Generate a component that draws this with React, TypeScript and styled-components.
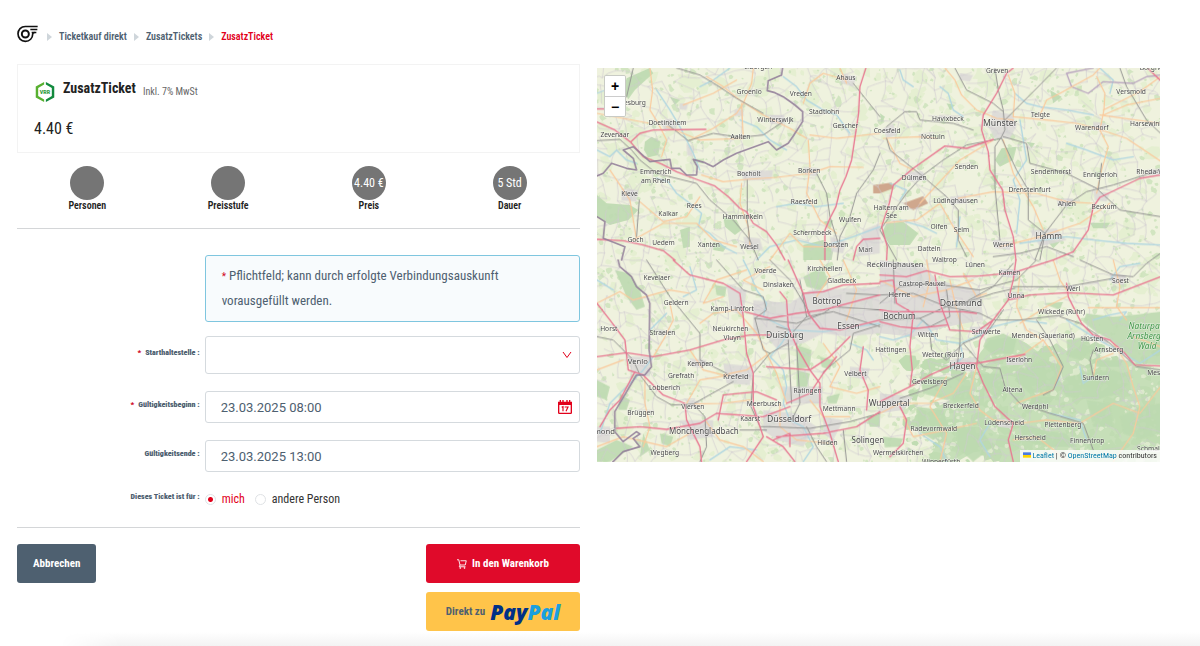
import React from 'react';
import styled, { createGlobalStyle } from 'styled-components';

const condensed = '"Roboto Condensed", "Liberation Sans Narrow", Roboto, sans-serif';

const GlobalStyle = createGlobalStyle`
  *, *::before, *::after { box-sizing: border-box; }
  body { margin: 0; background: #fff; color: #222; font-family: ${condensed}; font-size: 14px; }
  button, input, select { font-family: inherit; }
`;

const Page = styled.div`
  min-height: 100vh;
  display: flex;
  flex-direction: column;
`;

const Breadcrumb = styled.nav`
  display: flex;
  align-items: center;
  gap: 7px;
  height: 20px;
  margin: 27px 17px 17px;
  font-size: 10px;
  font-weight: 600;
`;

const Crumb = styled.a<{ $current?: boolean }>`
  color: ${(p) => (p.$current ? '#e2001a' : '#4e6070')};
  text-decoration: none;
  line-height: 20px;
`;

const HomeCrumb = styled(Crumb)`
  margin-right: 2px;
`;

const Separator = styled.span`
  border: 4px solid transparent;
  border-left: 5px solid #cfd6db;
  border-right: 0;
`;

const Columns = styled.main`
  flex: 1;
  display: grid;
  grid-template-columns: minmax(0, 1fr) minmax(0, 1fr);
  gap: 17px;
  padding: 0 40px 0 17px;
  align-items: start;
`;

const TicketCard = styled.section`
  height: 89px;
  border: 1px solid #f3f3f3;
  padding: 14px 16px;
`;

const TicketHead = styled.div`
  display: flex;
  align-items: flex-end;
  gap: 7px;
  height: 24px;
`;

const TicketTitle = styled.h1`
  margin: 0;
  padding-bottom: 5px;
  font-size: 14px;
  line-height: 20px;
  font-weight: 700;
`;

const TaxNote = styled.small`
  padding-bottom: 5px;
  font-size: 10px;
  line-height: 12px;
  color: #666;
`;

const Price = styled.p`
  margin: 16px 0 0;
  font-size: 16px;
  line-height: 20px;
`;

const Facts = styled.ul`
  display: grid;
  grid-template-columns: repeat(4, 1fr);
  list-style: none;
  margin: 0;
  padding: 13px 0 16px;
  border-bottom: 1px solid #d4d6d8;
`;

const Fact = styled.li`
  display: flex;
  flex-direction: column;
  align-items: center;
  font-size: 10px;
  line-height: 12px;
  font-weight: 600;
`;

const FactValue = styled.span`
  width: 34px;
  height: 34px;
  border-radius: 50%;
  background: #757575;
  color: #fff;
  display: flex;
  align-items: center;
  justify-content: center;
  white-space: nowrap;
  font-size: 12px;
  font-weight: 400;
`;

const Form = styled.form``;

const Fields = styled.div`
  display: grid;
  gap: 17px;
  padding: 26px 0 18px;
  border-bottom: 1px solid #d4d6d8;
`;

const Row = styled.div`
  display: grid;
  grid-template-columns: 1fr 2fr;
  align-items: center;
`;

const Label = styled.label`
  padding: 0 5px 4px 0;
  text-align: right;
  color: #4e6070;
  font-size: 8px;
  line-height: 12px;
  font-weight: 900;
`;

const Required = styled.span`
  color: #d0021b;
  margin-right: 2px;
`;

const NoticeMark = styled.span`
  color: #d0021b;
  font-size: 10px;
  line-height: 12px;
  margin-right: 3px;
`;

const Notice = styled.p`
  grid-column: 2;
  margin: 0 0 -3px;
  padding: 7px 16px 8px;
  border: 1px solid #7fc6df;
  border-radius: 3px;
  background: #f8fbfd;
  color: #4e6070;
  font-size: 13px;
  line-height: 25px;
`;

const Control = styled.div`
  position: relative;
`;

const Select = styled.select`
  display: block;
  width: 100%;
  height: 38px;
  padding: 0 32px 0 16px;
  border: 1px solid #d5dade;
  border-radius: 3px;
  background: #fff;
  appearance: none;
  font-size: 13px;
`;

const TextInput = styled.input`
  display: block;
  width: 100%;
  height: 32px;
  padding: 0 32px 0 15px;
  border: 1px solid #d5dade;
  border-radius: 3px;
  background: #fff;
  color: #4e6070;
  && { font-family: Roboto, sans-serif; }
  font-size: 13px;
`;

const ControlIcon = styled.svg`
  position: absolute;
  right: 8px;
  top: 50%;
  margin-top: -7px;
  pointer-events: none;
`;

const Radios = styled.div`
  display: flex;
  gap: 10px;
  height: 20px;
`;

const RadioLabel = styled.label`
  display: flex;
  align-items: center;
  gap: 6px;
  font-size: 12px;
  color: #333;
  &:has(input:checked) { color: #e2001a; }
`;

const Radio = styled.input`
  appearance: none;
  width: 11px;
  height: 11px;
  margin: 0;
  border: 1px solid #dfe2e5;
  border-radius: 50%;
  &:checked { background: radial-gradient(circle, #e2001a 2px, #fff 3px); }
`;

const Actions = styled.div`
  display: flex;
  justify-content: space-between;
  align-items: flex-start;
  padding: 16px 0 0;
`;

const BuyActions = styled.div`
  display: grid;
  gap: 9px;
  width: 154px;
`;

const tones = {
  slate: ['#4e6070', '#fff'],
  red: ['#e00a2a', '#fff'],
  yellow: ['#ffc44a', '#4e6070'],
} as const;

const Button = styled.button<{ $tone: keyof typeof tones }>`
  display: flex;
  align-items: center;
  justify-content: center;
  gap: 5px;
  height: 39px;
  padding: 0 16px;
  border: 0;
  border-radius: 3px;
  background: ${(p) => tones[p.$tone][0]};
  color: ${(p) => tones[p.$tone][1]};
  font-size: 11px;
  font-weight: 700;
  white-space: nowrap;
`;

const PayPalMark = styled.span`
  font-family: "Open Sans", sans-serif;
  font-size: 21px;
  line-height: 24px;
  font-weight: 800;
  font-style: italic;
  color: #003087;
`;

const PayPalEnd = styled.span`
  color: #1a9fdf;
`;

const FooterShade = styled.footer`
  height: 14px;
  margin-left: 60px;
  background: linear-gradient(to bottom, #fff, #f3f3f3);
  mask-image: linear-gradient(to right, transparent, #000 60px);
`;

const MapBox = styled.section`
  position: relative;
  height: 394px;
  margin-top: 4px;
  overflow: hidden;
  background: #eef0d8;
`;

const MapCanvas = styled.svg`
  display: block;
  width: 100%;
  height: 100%;
`;

const ZoomControl = styled.div`
  position: absolute;
  top: 7px;
  left: 7px;
  width: 22px;
  border: 1px solid #c9cbc5;
  border-radius: 2px;
  overflow: hidden;
`;

const ZoomButton = styled.button`
  display: block;
  width: 20px;
  height: 20px;
  padding: 0;
  border: 0;
  background: #fff;
  color: #000;
  && { font-family: "Liberation Sans", sans-serif; }
  font-size: 14px;
  line-height: 20px;
  font-weight: 700;
  & + & { border-top: 1px solid #ccc; }
`;

const Attribution = styled.div`
  position: absolute;
  right: 0;
  bottom: 0;
  padding: 0 3px;
  background: rgba(255, 255, 255, 0.8);
  color: #333;
  font-size: 8px;
  line-height: 12px;
  white-space: nowrap;
`;

const AttributionLink = styled.a`
  color: #0078a8;
  text-decoration: none;
`;

type Place = [string, number, number, number?];
type Tile = {
  x: number;
  y: number;
  urban: string;
  woods: string;
  streams: string;
  primary: string;
  rail: string;
  motorway: string;
  border: string;
  places: Place[];
};

const tiles: Tile[] = [
  {
    x: 0,
    y: 0,
    urban:
      'M210 185L245 175L260 205L225 212ZM435 150L460 148L462 168L432 168ZM540 165L585 165L580 195L540 190ZM455 335L550 330L545 360L460 362ZM640 320L690 325L680 350L645 345ZM95 385L145 390L140 425L95 422ZM460 530L510 535L520 570L470 570ZM720 530L770 545L760 580L725 575ZM820 510L870 490L870 580L800 590ZM755 40L800 50L790 80L755 70ZM270 130L295 130L290 150L268 148ZM290 250L310 260L308 290L292 285Z',
    woods:
      'M110 55L180 24L190 40L135 90L115 118L100 90ZM165 245L185 230L212 245L205 285L175 292L162 270ZM21 405L50 430L120 435L145 450L115 480L60 495L21 470ZM400 470L440 480L455 510L435 525L405 500ZM640 555L700 540L730 570L725 600L640 600ZM270 510L300 500L300 560L280 565ZM240 110L270 120L255 135ZM370 545L410 560L400 575L370 570ZM700 485L730 480L720 510Z',
    streams:
      'M200 355L235 365L260 400L300 430L335 460L325 500L360 520L400 560L440 580M21 270L60 290L80 270L110 300L140 310M200 90L240 150L270 200L310 280L330 330M580 50L620 80L650 120L700 150L740 165L780 220M450 180L500 200L540 240L590 270M330 80L370 60L420 24M500 600L540 560L620 540L700 560L790 530L870 500M21 100L60 85L100 120M560 440L620 430L680 440L760 430',
    primary:
      'M180 24L188 90L180 150L205 190L230 240L215 290M490 24L485 70L460 130L440 160L370 205L300 240M350 50L400 80L450 120L520 165L600 205L650 235M280 135L370 100L440 60M655 240L660 320L650 400L690 480L740 520M335 345L400 365L470 358L560 352L660 340L720 320L820 322M455 370L450 430L475 500L480 555M770 60L700 40L660 70L640 130M150 425L220 485L290 470L330 410M130 540L220 490L320 490L370 540L440 560M230 200L330 240L460 235L455 130M660 225L740 235L870 220M21 160L100 175L180 190M60 330L120 420L140 540M750 24L770 70M540 600L600 520L640 560L740 560',
    rail: 'M260 24L330 45L380 75L440 115L520 160M21 242L90 238L125 270L150 300L200 340L320 370L360 420L430 480L480 540L505 600M235 195L295 242L370 220L450 232L520 225L580 185M472 360L472 480L480 545M870 170L838 130L790 70M870 280L850 330L800 400L780 470L750 530L742 600M680 340L710 400L720 470L745 550M148 420L140 530M130 24L110 110',
    motorway:
      'M21 186L75 210L122 246L160 290L215 312L260 335L320 358L375 378L415 410L450 445L470 455L490 490L530 515L560 555L585 600M122 246L150 220L190 210L348 208M828 24L810 80L806 160L800 200L785 300L768 350L750 390L738 440L720 475L705 510L705 600M21 538L100 542L160 555L220 572L255 600M790 600L800 560L820 538L870 535M21 147L45 147',
    border:
      'M578 24L575 45L535 62L532 92L555 98L580 110L615 135L638 155L638 185L612 225L595 250L560 270L535 245L500 258L440 280L400 300L370 320L345 308L310 298L322 320L320 345L290 345L270 325L245 325L240 298L180 305L130 260L100 270L130 295L140 330L110 325L65 310L40 340L21 348M21 470L45 485L40 535L105 560L95 600',
    places: [
      ['Eibergen', 505, 21], ['Ahaus', 768, 52], ['Groenlo', 478, 94], ['Vreden', 633, 102], ['Doesburg', 122, 129],
      ['Stadtlohn', 703, 155], ['Winterswijk', 557, 179], ['Doetinchem', 233, 187], ['Gescher', 767, 198],
      ['Zevenaar', 75, 223], ['Aalten', 452, 231], ['Emmerich', 198, 336], ['am Rhein', 198, 361],
      ['Bocholt', 477, 341], ['Borken', 658, 333], ['Kleve', 119, 400], ['Rees', 313, 437], ['Raesfeld', 643, 425],
      ['Kalkar', 235, 461], ['Hamminkeln', 459, 471], ['Wulfen', 781, 479], ['Schermbeck', 668, 518],
      ['Goch', 137, 538], ['Uedem', 221, 547], ['Xanten', 357, 554], ['Wesel', 479, 559], ['Dorsten', 738, 555], ['Marl', 827, 570],
    ],
  },
  {
    x: 870,
    y: 0,
    urban:
      'M340 150L400 165L410 200L390 235L345 235L325 200ZM80 335L130 335L140 360L90 365ZM10 205L40 190L50 225L20 235ZM450 510L530 505L560 540L480 560ZM640 390L690 400L680 425L645 420ZM530 415L580 415L575 440L535 440ZM640 185L680 190L670 215L640 210ZM240 40L280 45L270 65L240 60ZM210 410L260 405L255 430L215 432ZM340 540L400 545L390 570L345 565ZM800 330L842 325L842 345L805 345Z',
    woods:
      'M20 490L70 485L115 520L90 555L30 555L5 520ZM365 265L410 260L400 300L360 320L345 300ZM630 488L690 488L680 505L640 505ZM440 245L465 250L455 265ZM200 130L225 135L210 150ZM500 540L540 545L520 565ZM330 350L355 345L350 375ZM510 90L545 110L520 130ZM0 160L15 170L5 190Z',
    streams:
      'M60 30L70 60L100 80M180 80L205 100L220 150L250 170M405 100L440 130L480 140L560 150L640 165M420 180L430 240L440 300L400 360L420 420L410 520M60 480L130 500L170 520M240 470L230 560M842 555L740 550L640 540L560 530L420 550M660 24L700 60L690 100M30 370L80 390L60 420M560 250L620 270L700 300L760 290',
    primary:
      'M195 24L225 60L245 105L290 150L315 160L350 175L400 180M385 45L405 100L400 170L500 180L590 190L650 205L740 235L842 303M480 165L500 120L540 100L640 45L660 24M670 165L740 135L842 115M650 50L675 100L672 150L660 210L685 260L665 330L650 400M235 415L340 395L470 400L560 425L640 430M120 430L240 300L340 240M370 240L400 340L460 440L490 510M0 490L110 480L180 430M180 430L220 500L280 590M20 235L60 310L100 330M10 235L120 230L170 235M360 560L480 530L600 490L690 430M842 50L780 95L670 150M660 165L842 190',
    rail: 'M530 24L470 85L375 180M345 24L355 90L370 150L375 210L365 230L345 260L345 380L360 540M225 24L260 90L340 130L370 155M365 235L260 255L190 300L130 345L80 400L0 510L50 600M365 235L410 330L445 390L445 480L495 520M465 600L495 520L560 435L620 395L700 375L842 330M495 520L480 600M20 200L75 155L110 155L120 180L220 190L280 210M20 235L30 270L130 350L200 410L235 450L235 540L260 590M720 24L740 80L800 180L842 220M370 230L440 250L450 310L560 340L650 385L720 450L842 470M340 590L420 580L500 560L580 590M665 310L655 390',
    motorway:
      'M400 24L380 40L350 100L310 165L305 210L325 275L330 330L368 390L375 450L400 530L408 600M340 238L260 265L195 258L100 325L40 375L28 430L5 500L22 560L20 600M842 345L780 355L660 412L640 440L625 510L580 575L520 600M803 24L842 62',
    border: '',
    places: [
      ['Greven', 352, 32], ['Borgholz', 822, 24], ['Versmold', 754, 95], ['Telgte', 482, 165], ['Havixbeck', 204, 175],
      ['Münster', 361, 191, 26], ['Harsewinkel', 808, 191], ['Warendorf', 636, 202], ['Coesfeld', 22, 211],
      ['Nottuln', 159, 230], ['Senden', 260, 321], ['Sendenhorst', 513, 334], ['Ennigerloh', 661, 344],
      ['Rheda-Wied', 826, 335], ['Dülmen', 103, 353], ['Drensteinfurt', 449, 390], ['Lüdinghausen', 227, 422],
      ['Ahlen', 561, 432], ['Beckum', 673, 441], ['Haltern am', 34, 442], ['See', 35, 468], ['Olfen', 178, 499],
      ['Selm', 245, 508], ['Hamm', 507, 530, 25], ['Werne', 370, 553], ['Datteln', 148, 566],
    ],
  },
  {
    x: 0,
    y: 600,
    urban:
      'M490 120L600 130L660 90L870 80L870 220L770 230L700 220L640 250L560 265L520 220L490 230ZM400 310L490 320L480 375L410 370ZM110 290L180 290L180 350L130 345ZM270 480L370 480L370 530L300 540ZM520 450L620 460L680 500L640 560L560 540L520 510ZM410 70L470 90L460 170L420 150ZM570 380L700 380L690 430L590 430ZM780 320L840 325L830 360L780 350ZM700 470L760 480L730 540L700 520ZM280 415L330 425L310 445ZM200 205L240 215L215 230ZM300 295L350 300L340 325L305 320ZM21 500L60 500L60 550L21 545Z',
    woods:
      'M75 30L120 40L150 90L165 140L140 150L110 110ZM640 50L700 20L715 70L690 90L650 80ZM620 255L665 270L660 320L620 330ZM375 75L410 80L405 110L380 105ZM620 330L660 340L650 390L620 385ZM21 360L60 380L50 420L21 410ZM90 400L120 420L110 450L85 450ZM80 540L130 560L60 605L21 605L21 570ZM830 470L870 460L870 500L840 500ZM210 520L250 530L240 560L215 550ZM690 290L730 300L720 330L695 320ZM710 410L750 400L740 430L715 430ZM160 520L180 570L150 590Z',
    streams:
      'M460 0L480 40L500 90L530 130L520 170L560 190L600 210L575 250L540 290L580 330L590 380L580 430L600 480L640 500L670 560L640 605M190 290L160 330L60 430L30 520M300 20L320 90L280 110M600 210L700 215L870 190M230 160L180 210M780 250L830 270L850 300M360 600L420 560L500 570M21 60L70 90',
    primary:
      'M20 130L90 95L130 120L240 90L300 100M190 290L220 240L250 180L240 130M21 330L100 300M165 350L165 430L180 500L160 560M300 270L340 330L400 345L470 330L530 285M330 190L370 160L440 150M400 110L340 130L380 60L470 30M310 432L400 430L480 420M420 345L330 360L290 430M345 480L390 540L460 560L520 605M690 0L720 50L680 110M760 0L800 90L770 180M440 150L500 220L560 340L590 430M570 430L570 500L620 540L720 550M700 250L750 320L720 380L800 400L870 380M660 420L700 470L780 470M520 90L460 60L540 20M21 560L100 530L230 560L300 520',
    rail: 'M170 0L240 110L330 220L330 300L370 320L420 345M380 0L460 90L520 110L530 150L495 175M21 230L70 240L130 300L150 345M150 345L200 410L245 435L310 432L430 365M495 175L540 180L620 190L700 160L730 140L870 150M610 215L650 170L730 155L870 200M595 250L540 280L490 340L483 440L510 500L540 500M595 240L605 430M620 250L630 430L605 480M540 500L660 505L780 485L870 460M310 432L345 470L350 560L330 605M450 510L530 510M650 500L680 560L710 605M495 175L520 270L540 280M600 210L560 200M700 335L780 270L790 220L870 195M540 0L600 60L660 160M770 100L870 105M760 510L770 605M630 60L650 170',
    motorway:
      'M250 0L300 45L400 70L450 100L460 170L470 280L490 340L490 440L520 530L470 605M21 290L110 278L190 290L300 270L400 240L480 225L540 225M21 130L60 180L105 240L115 330L160 345L220 405L285 430L290 480L300 500L330 560L335 605M135 335L90 420L60 450L30 500M80 505L150 500L230 508L330 490L380 460L520 470L600 440M385 480L400 405L500 395L560 420M465 155L540 175L620 160L700 150L870 105M570 95L590 120L595 200L620 260L660 330L690 370L690 440L720 520L745 605M595 0L640 100L655 160L690 205L750 210L870 180M530 320L600 325L660 330L720 290L780 230M640 100L700 95L760 75L870 70M590 430L660 400L700 340L740 290M820 260L810 330L835 390L830 450M560 530L700 520L800 500L870 455M530 530L580 560L615 605M550 540L600 520L600 560',
    border:
      'M85 0L90 20L125 50L140 80L170 105L180 130L178 270L185 320L165 345L140 345L75 455L75 515L100 545L140 515L150 522L130 535L150 560L100 575L70 605',
    places: [
      ['Kirchhellen', 705, 25], ['Voerde', 527, 33], ['Kevelaer', 201, 53], ['Dinslaken', 566, 74],
      ['Gladbeck', 756, 63], ['Geldern', 259, 129], ['Bottrop', 711, 125, 24], ['Kamp-Lintfort', 427, 147],
      ['Horst', 57, 206], ['Straelen', 218, 217], ['Neukirchen', 422, 206], ['Vluyn', 427, 232],
      ['Duisburg', 585, 228, 26], ['Essen', 776, 199, 25], ['Venlo', 144, 304, 23], ['Kempen', 331, 312],
      ['Grefrath', 274, 346], ['Krefeld', 438, 350, 23], ['Velbert', 797, 341], ['Lobberich', 224, 382],
      ['Ratingen', 653, 392], ['Viersen', 309, 440], ['Meerbusch', 523, 431], ['Mettmann', 748, 445],
      ['Brüggen', 153, 457], ['Kaarst', 481, 477], ['Düsseldorf', 598, 478, 26], ['Roermond', 18, 516, 23],
      ['Mönchengladbach', 342, 515, 24], ['Hilden', 713, 547], ['Wegberg', 225, 577],
    ],
  },
  {
    x: 870,
    y: 600,
    urban:
      'M0 0L130 15L170 60L300 90L310 180L200 200L100 230L0 220ZM210 300L290 290L280 335L220 330ZM0 400L100 410L70 450L0 460ZM380 290L440 290L430 315L380 315ZM380 95L430 95L420 120L385 120ZM270 200L330 200L320 225L280 225ZM690 40L740 45L730 75L695 70ZM640 225L690 235L680 255ZM350 475L400 480L390 505L355 500ZM540 75L590 75L580 95ZM360 25L420 30L410 55L365 50Z',
    woods:
      'M620 160L700 170L760 165L842 155L842 315L770 310L735 280L700 245L640 210L610 185ZM320 235L370 220L410 240L400 280L340 285L310 260ZM420 330L490 300L540 315L545 340L510 395L450 400L405 360ZM120 350L200 350L270 360L280 420L200 420L130 400ZM300 340L360 340L375 390L350 420L320 390ZM560 350L620 340L700 330L760 350L720 400L650 420L560 410L540 380ZM720 470L780 440L842 430L842 520L780 540L730 520ZM420 490L490 510L560 520L590 560L500 560L430 540ZM110 440L190 450L210 510L160 540L110 510ZM230 500L300 500L340 560L280 605L230 560ZM10 530L70 535L60 560L15 562ZM560 240L620 230L640 270L600 300L565 290ZM640 300L730 300L720 320L650 320ZM490 130L550 125L540 150ZM460 410L520 410L500 450L440 440ZM620 420L690 430L700 500L640 500Z',
    streams:
      'M0 230L40 240L90 225L130 180L170 240L240 250L290 230L340 200L420 180L500 190M640 180L690 165L740 155L720 180M600 320L610 370L640 350M240 250L250 290L210 330M842 270L780 310L730 280L640 230L560 180M540 350L520 390M690 60L720 20L780 10M120 520L180 560L200 605M330 490L300 540L330 590M510 460L600 480L620 540',
    primary:
      'M140 0L150 60L130 140M250 40L290 110L320 100M210 60L230 150L250 210M420 40L410 140L440 210L490 240L420 290L380 290M520 0L540 60L560 90M700 0L720 80L710 140L740 180M0 60L100 110L200 90L280 60M490 240L545 320L520 390L460 410L410 430M290 320L270 400L300 450L340 480L420 490L500 480L600 490L700 430L780 460L842 380M700 250L740 310L760 380L780 440L760 520L700 605M0 460L60 430L150 430L220 400L260 340M200 350L150 440L200 520L180 605M640 350L650 300L700 280M420 190L500 140L560 110M400 540L470 530L560 600M842 260L760 230M625 143L842 143M70 470L100 530L200 510L290 490',
    rail: 'M0 130L60 80L150 70L300 90L410 60L470 0M600 0L700 45L760 50L800 10L842 -20M0 180L120 175L200 140L300 160L340 180L420 180L550 165M150 220L155 270L200 300L250 250L310 320L360 325L375 380L420 430L510 460L610 490L640 570M370 150L320 220L250 250M60 415L150 385L250 340M470 180L510 240L550 320L520 390L490 405M640 270L630 300L640 350M540 170L600 190L690 250L770 320L842 330M400 80L560 80L700 55M0 105L100 100L200 140L250 130L340 100L405 85M120 175L150 200L210 170L200 90M240 150L240 250L230 330M40 0L45 130M400 10L340 80L250 130',
    motorway:
      'M0 45L80 50L140 32L210 50L300 48L400 38L520 0M408 0L400 60L385 120L340 180L300 240L290 320L310 370L345 440L400 490L385 540L400 605M385 120L450 105L560 98L700 105L842 50M40 60L50 130L100 160L90 260L97 330L90 380L0 425M40 155L250 155L290 160M90 380L150 345L230 310L290 310L435 283M165 45L180 130L210 210L290 215L340 180M560 70L565 110L605 190L640 225L690 240L735 280L765 315L842 318M0 185L60 200L110 205L200 195M60 440L80 480L70 550L30 590M0 150L40 155M0 65L40 60',
    border: '',
    places: [
      ['Recklinghausen', 46, 13, 23], ['Waltrop', 194, 0], ['Lünen', 286, 13], ['Kamen', 389, 39], ['Soest', 722, 62], ['Castrop-Rauxel', 127, 72],
      ['Werl', 580, 85], ['Herne', 59, 103, 23], ['Unna', 409, 107], ['Dortmund', 243, 132, 26], ['Wickede (Ruhr)', 545, 156],
      ['Bochum', 59, 171, 25], ['Witten', 145, 224], ['Schwerte', 319, 215], ['Menden (Sauerland)', 490, 226],
      ['Hüsten', 637, 235], ['Hattingen', 33, 269], ['Arnsberg', 687, 270], ['Wetter (Ruhr)', 190, 285],
      ['Iserlohn', 418, 299], ['Hagen', 248, 319, 25], ['Meschede', 850, 337], ['Sundern', 648, 353],
      ['Gevelsberg', 149, 365], ['Altena', 398, 389], ['Wuppertal', 28, 432, 25], ['Breckerfeld', 243, 437],
      ['Werdohl', 466, 440], ['Lüdenscheid', 373, 487], ['Plettenberg', 549, 493], ['Radevormwald', 162, 505],
      ['Herscheid', 451, 533], ['Finnentrop', 622, 541], ['Solingen', -36, 543, 24], ['Schmallen', 820, 565],
      ['Wermelskirchen', 55, 579], ['Wipperfürth', 184, 606],
    ],
  },
];

/* Seeded generator, so that the ground texture is the same on every render. */
function makeRandom(seed: number) {
  let s = seed;
  return () => {
    s = (s * 1664525 + 1013904223) % 4294967296;
    return s / 4294967296;
  };
}

function buildPatches(count: number, seed: number, min: number, max: number, hilly: boolean) {
  const rnd = makeRandom(seed);
  let d = '';
  for (let i = 0; i < count; i++) {
    const cx = 21 + rnd() * 1690;
    const cy = 24 + rnd() * 1182;
    if (hilly && (cx < 950 || cy < 820 + (1711 - cx) * 0.12)) continue;
    const r = min + rnd() * rnd() * (max - min);
    for (let k = 0; k < 7; k++) {
      const a = (k / 7) * Math.PI * 2;
      const q = r * (0.5 + rnd() * 0.8);
      d += `${k ? 'L' : 'M'}${Math.round(cx + Math.cos(a) * q)} ${Math.round(cy + Math.sin(a) * q)}`;
    }
    d += 'Z';
  }
  return d;
}

function buildLanes() {
  const rnd = makeRandom(77);
  const step = 38;
  const cols = 46;
  const rows = 33;
  const pts: [number, number][][] = [];
  for (let r = 0; r < rows; r++) {
    pts.push([]);
    for (let c = 0; c < cols; c++) {
      pts[r].push([Math.round(c * step + (rnd() - 0.5) * 34), Math.round(r * step + (rnd() - 0.5) * 34)]);
    }
  }
  let d = '';
  const join = (a: [number, number], b: [number, number]) => {
    const mx = Math.round((a[0] + b[0]) / 2 + (rnd() - 0.5) * 16);
    const my = Math.round((a[1] + b[1]) / 2 + (rnd() - 0.5) * 16);
    d += `M${a[0]} ${a[1]}Q${mx} ${my} ${b[0]} ${b[1]}`;
  };
  for (let r = 0; r < rows - 1; r++) {
    for (let c = 0; c < cols - 1; c++) {
      if (rnd() < 0.55) join(pts[r][c], pts[r][c + 1]);
      if (rnd() < 0.55) join(pts[r][c], pts[r + 1][c]);
      if (rnd() < 0.1) join(pts[r][c], pts[r + 1][c + 1]);
    }
  }
  return d;
}

const meadows = buildPatches(900, 5, 8, 34, false);
const copses = buildPatches(1500, 11, 3, 13, false);
const hills = buildPatches(2200, 23, 8, 34, true);
const clearings = buildPatches(2600, 31, 4, 16, true);
const lanes = buildLanes();

type LayerKey = 'urban' | 'woods' | 'streams' | 'primary' | 'rail' | 'motorway' | 'border';

function Layer({ of, ...rest }: { of: LayerKey } & React.SVGProps<SVGGElement>) {
  return (
    <g {...rest}>
      {tiles.map((t) => (
        <path key={`${t.x}-${t.y}`} d={t[of]} transform={`translate(${t.x} ${t.y})`} />
      ))}
    </g>
  );
}

function RegionMap() {
  return (
    <MapCanvas viewBox="21 24 1690 1182" preserveAspectRatio="xMidYMid slice" role="img" aria-label="Karte">
      <rect x="-600" y="-600" width="3000" height="2400" fill="#eff2de" />
      <path d={meadows} fill="#e2edcc" opacity="0.75" />
      <path d={copses} fill="#c6dfb5" opacity="0.7" />
      <path
        d="M1170 880L1200 840L1270 830L1310 850L1350 880L1400 850L1440 880L1480 850L1540 890L1600 900L1711 925V1206H1230L1180 1160L1100 1206H1010L1060 1120L1010 1060L1080 1020L1130 960Z"
        fill="#c6dfb8"
      />
      <path d={hills} fill="#c0dcb2" />
      <path d={clearings} fill="#e9f0d8" opacity="0.65" />
      <Layer of="woods" fill="#bddab0" opacity="0.9" />
      <Layer of="urban" fill="#dbd9d7" opacity="0.85" />
      <path d="M940 430L1000 408L1015 430L970 450ZM850 375L905 368L910 385L870 400L850 400Z" fill="#cfa78d" />
      <g fill="none" strokeLinejoin="round" strokeLinecap="round">
        <path d={lanes} stroke="#cfcad0" strokeWidth="2.5" opacity="0.75" />
        <Layer of="streams" stroke="#b0d6e0" strokeWidth="4" />
        <path
          d="M1510 24L1430 40L1445 80L1495 100L1540 65L1630 70L1670 50L1711 45"
          stroke="#b9a6bf"
          strokeWidth="4"
        />
        <Layer of="primary" stroke="#fac99b" strokeWidth="3.500" />
        <Layer of="rail" stroke="#949492" strokeWidth="3" />
        <Layer of="motorway" stroke="#e87690" strokeWidth="4" />
        <Layer of="border" stroke="#94819b" strokeWidth="5" opacity="0.9" />
      </g>
      <g
        fontFamily='"Noto Sans", sans-serif'
        textAnchor="middle"
        fill="#4a4a4a"
        stroke="#fff"
        strokeOpacity="0.55"
        strokeWidth="3"
        style={{ paintOrder: 'stroke' }}
      >
        {tiles.map((t) =>
          t.places.map(([name, x, y, size = 20]) => (
            <text key={name} x={t.x + x} y={t.y + y + 7} fontSize={size}>
              {name}
            </text>
          )),
        )}
        <g fill="#3f9547" fontStyle="italic" fontSize="25">
          <text x="1674" y="808">Naturpark</text>
          <text x="1663" y="838">Arnsberg</text>
          <text x="1672" y="868">Wald</text>
        </g>
      </g>
    </MapCanvas>
  );
}

function HomeLogo() {
  return (
    <svg width="21" height="18" viewBox="0 0 63 54" fill="none" stroke="#111" aria-hidden="true">
      <path d="M62 4.500H25C12 4.500 3 14 3 26.500S12 49 25 49S47 39.500 47 27.500C47 24 49 22.500 53 22.500" strokeWidth="5" />
      <circle cx="25" cy="27" r="10.500" strokeWidth="6" />
      <path d="M40 13.500H61M44 22.500H58" strokeWidth="4" />
    </svg>
  );
}

function VrrLogo() {
  return (
    <svg width="22" height="22" viewBox="0 0 63 63" aria-hidden="true">
      <path d="M29 3L5 16V47L29 60V53L12 43V20L29 10Z" fill="#58b030" />
      <path d="M34 3L58 16V47L34 60V53L51 43V20L34 10Z" fill="#128a3e" />
      <text x="31.500" y="37" textAnchor="middle" fontFamily="Roboto, sans-serif" fontWeight="900" fontSize="15" fill="#2d9c3c">
        VRR
      </text>
    </svg>
  );
}

function CartIcon() {
  return (
    <svg width="10" height="10" viewBox="0 0 20 20" fill="none" stroke="#fff" strokeWidth="1.800" aria-hidden="true">
      <path d="M0 1.500H3.500L6 12H16.500L18.500 3.500H7M6 12L4.500 15.500H17" />
      <circle cx="6.500" cy="18" r="1" />
      <circle cx="15" cy="18" r="1" />
    </svg>
  );
}

const facts = [
  { label: 'Personen', value: '' },
  { label: 'Preisstufe', value: '' },
  { label: 'Preis', value: '4.40 €' },
  { label: 'Dauer', value: '5 Std' },
];

export default function App() {
  return (
    <Page>
      <GlobalStyle />
      <Breadcrumb aria-label="Brotkrumen">
        <HomeCrumb href="#start" aria-label="Startseite">
          <HomeLogo />
        </HomeCrumb>
        <Separator />
        <Crumb href="#direkt">Ticketkauf direkt</Crumb>
        <Separator />
        <Crumb href="#zusatz">ZusatzTickets</Crumb>
        <Separator />
        <Crumb href="#ticket" $current>
          ZusatzTicket
        </Crumb>
      </Breadcrumb>
      <Columns>
        <div>
          <TicketCard>
            <TicketHead>
              <VrrLogo />
              <TicketTitle>ZusatzTicket</TicketTitle>
              <TaxNote>Inkl. 7% MwSt</TaxNote>
            </TicketHead>
            <Price>4.40 €</Price>
          </TicketCard>
          <Facts>
            {facts.map((f) => (
              <Fact key={f.label}>
                <FactValue>{f.value}</FactValue>
                {f.label}
              </Fact>
            ))}
          </Facts>
          <Form onSubmit={(e) => e.preventDefault()}>
            <Fields>
              <Row>
                <Notice>
                  <NoticeMark>*</NoticeMark>Pflichtfeld; kann durch erfolgte Verbindungsauskunft vorausgefüllt werden.
                </Notice>
              </Row>
              <Row>
                <Label htmlFor="stop">
                  <Required>*</Required> Starthaltestelle :
                </Label>
                <Control>
                  <Select id="stop" defaultValue="">
                    <option value=""></option>
                  </Select>
                  <ControlIcon width="10" height="14" viewBox="0 0 10 14" fill="none" stroke="#e2001a">
                    <path d="M1 4L5 9.500L9 4" />
                  </ControlIcon>
                </Control>
              </Row>
              <Row>
                <Label htmlFor="begin">
                  <Required>*</Required> Gültigkeitsbeginn :
                </Label>
                <Control>
                  <TextInput id="begin" defaultValue="23.03.2025 08:00" />
                  <ControlIcon width="14" height="14" viewBox="0 0 42 42">
                    <path
                      fillRule="evenodd"
                      fill="#e2001a"
                      d="M0 5H5V0H9V5H13V0H17V5H25V0H29V5H33V0H37V5H42V38Q42 42 38 42H4Q0 42 0 38ZM4 15V38H38V15Z"
                    />
                    <path d="M11 22L15 20V34M20 21H30L24 34" fill="none" stroke="#e2001a" strokeWidth="3.500" />
                  </ControlIcon>
                </Control>
              </Row>
              <Row>
                <Label htmlFor="end">Gültigkeitsende :</Label>
                <TextInput id="end" defaultValue="23.03.2025 13:00" />
              </Row>
              <Row role="radiogroup" aria-labelledby="for-whom">
                <Label as="span" id="for-whom">
                  Dieses Ticket ist für :
                </Label>
                <Radios>
                  <RadioLabel>
                    <Radio type="radio" name="person" defaultChecked />
                    mich
                  </RadioLabel>
                  <RadioLabel>
                    <Radio type="radio" name="person" />
                    andere Person
                  </RadioLabel>
                </Radios>
              </Row>
            </Fields>
            <Actions>
              <Button type="button" $tone="slate">
                Abbrechen
              </Button>
              <BuyActions>
                <Button type="submit" $tone="red">
                  <CartIcon />
                  In den Warenkorb
                </Button>
                <Button type="button" $tone="yellow">
                  Direkt zu
                  <PayPalMark>
                    Pay<PayPalEnd>Pal</PayPalEnd>
                  </PayPalMark>
                </Button>
              </BuyActions>
            </Actions>
          </Form>
        </div>
        <MapBox>
          <RegionMap />
          <ZoomControl>
            <ZoomButton aria-label="Vergrößern">+</ZoomButton>
            <ZoomButton aria-label="Verkleinern">−</ZoomButton>
          </ZoomControl>
          <Attribution>
            <svg width="8" height="6" viewBox="0 0 12 8" aria-hidden="true">
              <path fill="#4C7BE1" d="M0 0h12v4H0z" />
              <path fill="#FFD500" d="M0 4h12v4H0z" />
            </svg>{' '}
            <AttributionLink href="#leaflet">Leaflet</AttributionLink> | ©{' '}
            <AttributionLink href="#osm">OpenStreetMap</AttributionLink> contributors
          </Attribution>
        </MapBox>
      </Columns>
      <FooterShade />
    </Page>
  );
}
